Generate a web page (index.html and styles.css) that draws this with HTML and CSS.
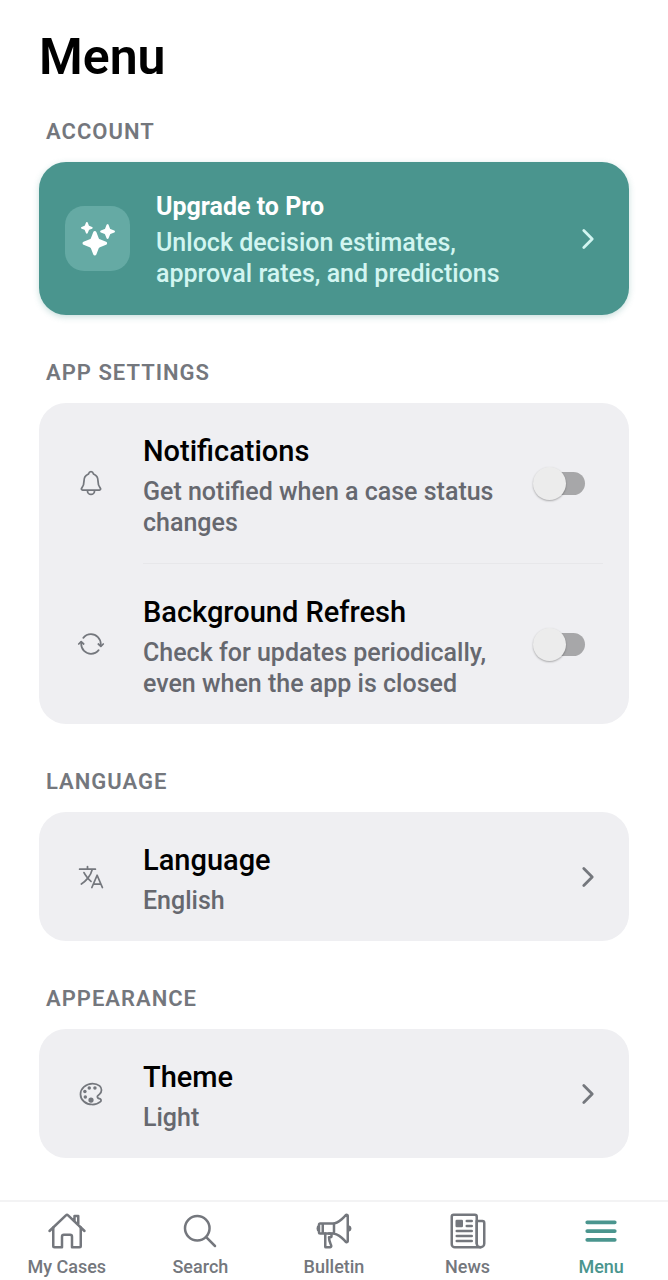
FILE: index.html
```html
<!DOCTYPE html>
<html lang="en">
<head>
    <meta charset="UTF-8">
    <meta name="viewport" content="width=device-width, initial-scale=1">
    <title>Menu</title>
    <link rel="stylesheet" href="styles.css">
</head>
<body>

<main class="content">
    <h1>Menu</h1>

    <section>
        <h2>Account</h2>
        <button type="button" class="card row upgrade">
            <span class="upgrade-icon">
                <svg viewBox="0 0 512 512" aria-hidden="true"><path d="M208 506a25 25 0 01-23-16l-36-93a32 32 0 00-18-18l-93-36a25 25 0 010-46l93-36a32 32 0 0018-18l36-93a25 25 0 0146 0l36 93a32 32 0 0018 18l93 36a25 25 0 010 46l-93 36a32 32 0 00-18 18l-36 93a25 25 0 01-23 16z"/><path d="M88 176a14.67 14.67 0 01-13.69-9.4l-16.86-43.84a7.28 7.28 0 00-4.21-4.21L9.4 101.69a14.67 14.67 0 010-27.38l43.84-16.86a7.31 7.31 0 004.21-4.21L74.16 9.79A15 15 0 0186.23.11a14.67 14.67 0 0115.46 9.29l16.86 43.84a7.31 7.31 0 004.21 4.21l43.84 16.86a14.67 14.67 0 010 27.38l-43.84 16.86a7.28 7.28 0 00-4.21 4.21l-16.86 43.84A14.67 14.67 0 0188 176zM400 256a16 16 0 01-14.93-10.26l-22.84-59.37a8 8 0 00-4.6-4.6l-59.37-22.84a16 16 0 010-29.86l59.37-22.84a8 8 0 004.6-4.6l22.67-58.95a16.45 16.45 0 0113.17-10.57 16 16 0 0116.86 10.15l22.84 59.37a8 8 0 004.6 4.6l59.37 22.84a16 16 0 010 29.86l-59.37 22.84a8 8 0 00-4.6 4.6l-22.84 59.37A16 16 0 01400 256z"/></svg>
            </span>
            <span class="row-text">
                <span class="title">Upgrade to Pro</span>
                <span class="sub">Unlock decision estimates, approval rates, and predictions</span>
            </span>
            <svg class="chevron" viewBox="0 0 512 512" aria-hidden="true"><path d="M184 112l144 144-144 144"/></svg>
        </button>
    </section>

    <section>
        <h2>App Settings</h2>
        <div class="card">
            <label class="row" for="notifications">
                <span class="row-icon">
                    <svg viewBox="0 0 512 512" aria-hidden="true"><path d="M427.68 351.43C402 320 383.87 304 383.87 217.35 383.87 138 343.35 109.73 310 96c-4.43-1.82-8.6-6-9.95-10.55C294.2 65.54 277.8 48 256 48s-38.21 17.55-44 37.47c-1.35 4.6-5.52 8.71-9.95 10.53-33.39 13.75-73.87 41.92-73.87 121.35C128.13 304 110 320 84.32 351.43 73.68 364.45 83 384 101.61 384h308.88c18.51 0 27.77-19.61 17.19-32.57zM320 384v16a64 64 0 01-128 0v-16"/></svg>
                </span>
                <span class="row-text">
                    <span class="title">Notifications</span>
                    <span class="sub">Get notified when a case status changes</span>
                </span>
                <input type="checkbox" class="switch" id="notifications">
            </label>
            <hr>
            <label class="row" for="background-refresh">
                <span class="row-icon">
                    <svg viewBox="0 0 512 512" aria-hidden="true"><path d="M434.67 285.59v-29.8c0-98.73-80.24-178.79-179.2-178.79a179 179 0 00-140.14 67.36m-38.53 82v29.8C76.8 355 157 435 256 435a180.45 180.45 0 00140-66.92"/><path d="M32 256l44-44 46 44M480 256l-44 44-46-44"/></svg>
                </span>
                <span class="row-text">
                    <span class="title">Background Refresh</span>
                    <span class="sub">Check for updates periodically, even when the app is closed</span>
                </span>
                <input type="checkbox" class="switch" id="background-refresh">
            </label>
        </div>
    </section>

    <section>
        <h2>Language</h2>
        <button type="button" class="card row">
            <span class="row-icon">
                <svg viewBox="0 0 512 512" aria-hidden="true"><path d="M48 112h288M192 64v48M272 448l96-224 96 224M301.5 384h133M281.3 112S257 206 199 277 80 384 80 384"/><path d="M256 336s-35-27-72-75-56-85-56-85"/></svg>
            </span>
            <span class="row-text">
                <span class="title">Language</span>
                <span class="sub">English</span>
            </span>
            <svg class="chevron" viewBox="0 0 512 512" aria-hidden="true"><path d="M184 112l144 144-144 144"/></svg>
        </button>
    </section>

    <section>
        <h2>Appearance</h2>
        <button type="button" class="card row">
            <span class="row-icon">
                <svg viewBox="0 0 512 512" aria-hidden="true"><path d="M430.11 347.9c-6.6-6.1-16.3-7.6-24.6-9-11.5-1.9-15.9-4-22.6-10-14.3-12.7-14.3-31.1 0-43.8l30.3-26.9c46.4-41 46.4-108.2 0-149.2-34.2-30.1-80.1-45-127.8-45-55.7 0-113.9 20.3-158.8 60.1-83.5 73.8-83.5 194.7 0 268.5 41.5 36.7 97.5 55 152.9 55.4h1.7c55.4 0 110-17.9 148.8-52.4 14.4-12.7 11.99-36.6.1-47.7z"/><g class="solid"><circle cx="144" cy="208" r="32"/><circle cx="152" cy="311" r="32"/><circle cx="224" cy="144" r="32"/><circle cx="256" cy="367" r="48"/><circle cx="328" cy="144" r="32"/></g></svg>
            </span>
            <span class="row-text">
                <span class="title">Theme</span>
                <span class="sub">Light</span>
            </span>
            <svg class="chevron" viewBox="0 0 512 512" aria-hidden="true"><path d="M184 112l144 144-144 144"/></svg>
        </button>
    </section>
</main>

<nav class="tab-bar">
    <a href="#cases">
        <svg viewBox="0 0 512 512" aria-hidden="true"><path d="M80 212v236a16 16 0 0016 16h96V328a24 24 0 0124-24h80a24 24 0 0124 24v136h96a16 16 0 0016-16V212"/><path d="M480 256L266.89 52c-5-5.28-16.69-5.34-21.78 0L32 256M400 179V64h-48v69"/></svg>
        <span>My Cases</span>
    </a>
    <a href="#search">
        <svg viewBox="0 0 512 512" aria-hidden="true"><path d="M221.09 64a157.09 157.09 0 10157.09 157.09A157.1 157.1 0 00221.09 64zM338.29 338.29L448 448"/></svg>
        <span>Search</span>
    </a>
    <a href="#bulletin">
        <svg viewBox="0 0 512 512" aria-hidden="true"><path d="M407.94 52.22S321.3 160 240 160H80a16 16 0 00-16 16v96a16 16 0 0016 16h160c81.3 0 167.94 108.23 167.94 108.23 6.06 8 24.06 2.52 24.06-9.83V62c0-12.31-17-18.82-24.06-9.78zM64 256s-16-6-16-32 16-32 16-32M448 246s16-4.33 16-22-16-22-16-22M256 160v128M112 160v128"/><path d="M144 288v168a8 8 0 008 8h53a16 16 0 0015.29-20.73C211.91 416.39 192 386.08 192 336h16a16 16 0 0016-16v-16a16 16 0 00-16-16h-16"/></svg>
        <span>Bulletin</span>
    </a>
    <a href="#news">
        <svg viewBox="0 0 512 512" aria-hidden="true"><path d="M368 415.86V72a24.07 24.07 0 00-24-24H72a24.07 24.07 0 00-24 24v352a40.12 40.12 0 0040 40h328"/><path d="M416 464a48 48 0 01-48-48V128h72a24 24 0 0124 24v264a48 48 0 01-48 48zM240 128h64M240 192h64M112 256h192M112 320h192M112 384h192"/><path class="solid" d="M176 208h-64a16 16 0 01-16-16v-64a16 16 0 0116-16h64a16 16 0 0116 16v64a16 16 0 01-16 16z"/></svg>
        <span>News</span>
    </a>
    <a href="#menu" class="active" aria-current="page">
        <svg viewBox="0 0 512 512" aria-hidden="true"><path d="M80 144h352M80 256h352M80 368h352"/></svg>
        <span>Menu</span>
    </a>
</nav>

</body>
</html>
```
FILE: styles.css
```css
* {
    box-sizing: border-box;
}
body {
    font-family: Roboto, sans-serif;
    font-weight: 500;
    background-color: #fff;
    color: #000;
    margin: 0;
    min-height: 100vh;
    display: flex;
    flex-direction: column;
}
.content {
    flex: 1;
    padding: 27px 39px 40px;
}
h1 {
    margin: 0 0 31px;
    font-size: 50px;
    line-height: 60px;
    font-weight: 600;
}
section + section {
    margin-top: 44px;
}
h2 {
    margin: 0 0 17px 7px;
    font-size: 22px;
    line-height: 27px;
    font-weight: 600;
    letter-spacing: 1px;
    text-transform: uppercase;
    color: #74777d;
}
.card {
    display: block;
    width: 100%;
    border: none;
    border-radius: 27px;
    background-color: #efeff2;
    color: inherit;
    font: inherit;
    text-align: left;
}
.row {
    display: flex;
    align-items: center;
    gap: 26px;
    padding: 25px 26px;
    cursor: pointer;
}
.row-icon {
    display: flex;
    justify-content: center;
    width: 52px;
}
.row-icon svg {
    width: 28px;
    height: 28px;
}
.row-text {
    flex: 1;
    padding-top: 5px;
}
.title,
.sub {
    display: block;
}
.title {
    margin-bottom: 6px;
    font-size: 29px;
    line-height: 37px;
}
.sub {
    font-size: 25px;
    line-height: 31px;
    color: #66686f;
}
svg {
    flex: none;
    fill: none;
    stroke: #74777d;
    stroke-width: 32;
    stroke-linecap: round;
    stroke-linejoin: round;
}
.solid {
    fill: #74777d;
    stroke: none;
}
.chevron {
    width: 30px;
    height: 30px;
    stroke-width: 48;
}
hr {
    height: 1px;
    margin: 0 26px 0 104px;
    border: none;
    background-color: #e7e7ea;
}

/* upgrade card */
.upgrade {
    padding: 26px;
    background-color: #4a958e;
    box-shadow: 0 2px 6px rgba(74, 149, 142, 0.3);
}
.upgrade-icon {
    display: flex;
    align-items: center;
    justify-content: center;
    width: 65px;
    height: 65px;
    border-radius: 19px;
    background-color: #65aaa4;
}
.upgrade-icon svg {
    width: 34px;
    height: 34px;
    fill: #fff;
    stroke: none;
}
.upgrade .row-text {
    padding-top: 0;
}
.upgrade .title {
    margin-bottom: 1px;
    font-size: 25px;
    line-height: 38px;
    font-weight: 700;
    color: #fff;
}
.upgrade .sub {
    color: #d2f5f1;
}
.upgrade .chevron {
    stroke: #d2f5f1;
}

/* switch */
.switch {
    appearance: none;
    flex: none;
    display: flex;
    align-items: center;
    width: 49px;
    height: 23px;
    margin: 0 18px 0 0;
    border-radius: 12px;
    background-color: #a7a7a9;
    cursor: pointer;
}
.switch::before {
    content: "";
    flex: none;
    width: 33px;
    height: 33px;
    margin-left: -3px;
    border-radius: 50%;
    background-color: #ececec;
    box-shadow: 0 1px 2px rgba(0, 0, 0, 0.3);
}
.switch:checked {
    background-color: #4a958e;
}
.switch:checked::before {
    margin-left: 19px;
}

/* bottom tabs */
.tab-bar {
    position: sticky;
    bottom: 0;
    display: flex;
    padding: 9px 0 2px;
    border-top: 2px solid #f3f3f4;
    background-color: #fff;
}
.tab-bar a {
    flex: 1;
    display: flex;
    flex-direction: column;
    align-items: center;
    gap: 5px;
    font-size: 18px;
    line-height: 22px;
    color: #74777d;
    text-decoration: none;
}
.tab-bar svg {
    width: 40px;
    height: 40px;
}
.tab-bar .active {
    color: #4a958e;
}
.tab-bar .active svg {
    stroke: #4a958e;
    stroke-width: 48;
}
```
